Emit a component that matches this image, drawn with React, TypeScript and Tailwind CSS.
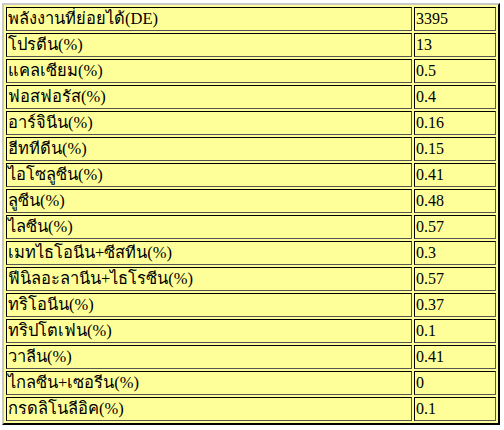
import React from 'react';

const rows: [string, string][] = [
  ['พลังงานที่ย่อยได้(DE)', '3395'],
  ['โปรตีน(%)', '13'],
  ['แคลเซียม(%)', '0.5'],
  ['ฟอสฟอรัส(%)', '0.4'],
  ['อาร์จินีน(%)', '0.16'],
  ['ฮีททีดีน(%)', '0.15'],
  ['ไอโซลูซีน(%)', '0.41'],
  ['ลูซีน(%)', '0.48'],
  ['ไลซีน(%)', '0.57'],
  ['เมทไธโอนีน+ซีสทีน(%)', '0.3'],
  ['ฟีนิลอะลานีน+ไธโรซีน(%)', '0.57'],
  ['ทริโอนีน(%)', '0.37'],
  ['ทริปโตเฟน(%)', '0.1'],
  ['วาลีน(%)', '0.41'],
  ['ไกลซีน+เซอรีน(%)', '0'],
  ['กรดลิโนลีอิค(%)', '0.1'],
];

export default function App() {
  return (
    <div className="bg-white w-[504px] h-[430px] pl-[2px] pt-[3px]">
      <table
        className="w-[498px] border-separate border-spacing-[2px] bg-[#ffff99] border-2 border-t-[#c8c8c8] border-l-[#c8c8c8] border-b-black border-r-black text-black text-[16px] leading-[20px]"
        style={{ fontFamily: '"Liberation Serif", "Noto Sans", serif' }}
      >
        <tbody>
          {rows.map(([name, value]) => (
            <tr key={name}>
              <td className="h-[24px] w-[406px] px-[1px] text-[16.5px] border border-t-black border-l-black border-b-[#555] border-r-[#555] align-middle">
                {name}
              </td>
              <td className="h-[24px] px-[1px] border border-t-black border-l-black border-b-[#555] border-r-[#555] align-middle">
                {value}
              </td>
            </tr>
          ))}
        </tbody>
      </table>
    </div>
  );
}
